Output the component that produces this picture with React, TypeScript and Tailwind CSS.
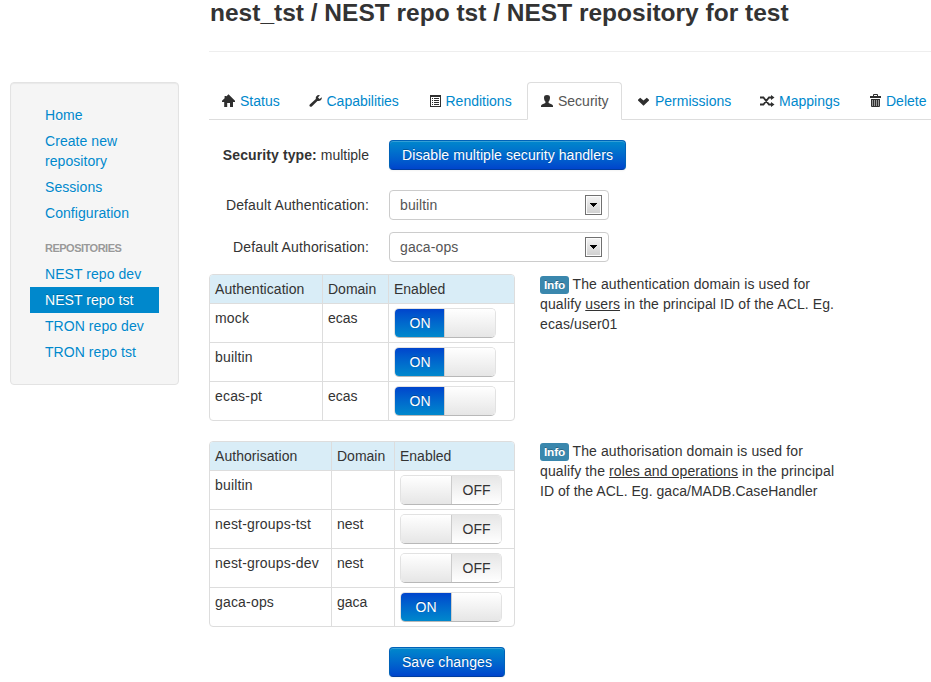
import React from "react";

function Icon({ name }: { name: string }) {
  return (
    <svg width="14" height="14" viewBox="0 0 14 14" fill="#2f2f2f" className="mt-[3px] mr-1 shrink-0 overflow-visible">
      {name === "home" && <path d="M6.5 0.3 L13 6.8 V8 H11 V13 H8 V9 H5.2 V13 H2.2 V8 H0 V6.8 L2.6 4.2 V2 H4.3 V2.5Z" />}
      {name === "wrench" && (
        <path d="M12.8 3.2 L10.6 5 L9 3.4 L10.8 1.2 C8.4 .6 6.2 2.6 6.8 5 L.8 10.6 C-.4 12 1.4 13.6 2.8 12.4 L8.4 7 C11 7.6 13.2 5.6 12.8 3.2Z" />
      )}
      {name === "list" && (
        <g transform="translate(1 0)">
          <path fillRule="evenodd" d="M1 1 H12 V13 H1Z M2 3 V12 H11 V3Z" />
          <path d="M3 4h1v1H3z M5 4h5v1H5z M3 6h1v1H3z M5 6h5v1H5z M3 8h1v1H3z M5 8h5v1H5z M3 10h1v1H3z M5 10h5v1H5z" />
        </g>
      )}
      {name === "user" && (
        <path d="M4 3.5 C4 1.8 5 1 7 1 S10 1.8 10 3.5 C10 5.5 9.4 6.8 8.6 7.6 V9 L12 10.5 Q13 11 13 12 V13 H1 V12 Q1 11 2 10.5 L5.4 9 V7.6 C4.6 6.8 4 5.5 4 3.5Z" />
      )}
      {name === "down" && <path d="M1 5.8 L3.2 3.8 L6.5 6.6 L9.8 3.8 L12 5.8 V6.6 L6.5 11.8 L1 6.6Z" />}
      {name === "random" && (
        <g transform="translate(-1 0)">
          <path d="M0 3.5H3.4L9 10.5H12 M0 10.5H3.4L9 3.5H12" fill="none" stroke="#2f2f2f" strokeWidth="1.8" />
          <path d="M11 1 L14.5 3.5 L11 6Z M11 8 L14.5 10.5 L11 13Z" />
        </g>
      )}
      {name === "trash" && (
        <>
          <path fill="#999" d="M3 5H12V12H3Z" />
          <path
            fillRule="evenodd"
            d="M2 2H5V1Q5 0 6 0H9Q10 0 10 1V2H13V4H2Z M6 1V2H9V1Z M3 5H12V12Q12 13 11 13H4Q3 13 3 12Z M4 6V12H5V6Z M6 6V12H7V6Z M8 6V12H9V6Z M10 6V12H11V6Z"
          />
        </>
      )}
    </svg>
  );
}

function Tab({ icon, children, width, active = false }: { icon: string; children: React.ReactNode; width: string; active?: boolean }) {
  return (
    <a
      className={
        "mr-[2px] flex h-[38px] shrink-0 rounded-t-[4px] border pt-2 pl-3 text-[14px] leading-[20px] whitespace-nowrap " +
        width +
        (active ? " border-[#ddd] border-b-white bg-white text-[#555]" : " border-transparent text-[#08c]")
      }
    >
      <Icon name={icon} />
      {children}
    </a>
  );
}

function SideLink({ children, active = false }: { children: React.ReactNode; active?: boolean }) {
  return (
    <a
      className={
        "block px-[15px] py-[3px] text-[14px] leading-[20px] tracking-[0.06px] " +
        (active ? "bg-[#08c] text-white [text-shadow:0_-1px_0_rgba(0,0,0,0.2)]" : "text-[#08c] [text-shadow:0_1px_0_rgba(255,255,255,0.5)]")
      }
    >
      {children}
    </a>
  );
}

function Button({ children, className }: { children: React.ReactNode; className: string }) {
  return (
    <button
      className={
        "flex h-[30px] items-center justify-center rounded-[4px] border border-[#0062b8] border-b-[#003c9e] bg-linear-to-b from-[#08c] to-[#04c] text-[14px] leading-[20px] whitespace-nowrap text-white shadow-[inset_0_1px_0_rgba(255,255,255,0.2),0_1px_2px_rgba(0,0,0,0.05)] [text-shadow:0_-1px_0_rgba(0,0,0,0.25)] " +
        className
      }
    >
      {children}
    </button>
  );
}

function SelectRow({ title, value, className }: { title: string; value: string; className: string }) {
  return (
    <div className={"flex h-[30px] items-center " + className}>
      <span className="w-[160px] text-right tracking-[0.13px]">{title}</span>
      <div className="ml-5 flex h-[30px] w-[220px] items-center justify-between rounded-[4px] border border-[#ccc] bg-white pr-[6px] pl-[10px] tracking-[0.1px] text-[#555]">
        {value}
        <span className="flex h-5 w-[17px] items-center justify-center border border-[#707070] bg-linear-to-b from-[#f4f4f4] to-[#cfcfcf] shadow-[inset_0_0_0_1px_#fcfcfc]">
          <svg width="7" height="4" viewBox="0 0 7 4" shapeRendering="crispEdges">
            <path d="M0 0H7L3.5 4Z" fill="#000" />
          </svg>
        </span>
      </div>
    </div>
  );
}

function Switch({ on, wide }: { on: boolean; wide: boolean }) {
  const half = wide ? "w-[50px]" : "w-[49px] pl-px";
  return (
    <div className="flex h-[30px] w-[102px] overflow-hidden rounded-[5px] border border-[#e2e2e2] border-b-[#b8b8b8] leading-[28px]">
      {on ? (
        <>
          <span className={"bg-linear-to-b from-[#04c] to-[#08c] text-center text-white [text-shadow:0_-1px_0_rgba(0,0,0,0.25)] " + half}>ON</span>
          <span className="flex-1 border-l border-[#ccc] bg-linear-to-b from-white to-[#e6e6e6]" />
        </>
      ) : (
        <>
          <span className="w-[51px] border-r border-[#ccc] bg-linear-to-b from-white to-[#e6e6e6]" />
          <span className="flex-1 bg-linear-to-b from-[#e6e6e6] to-white text-center text-[#333]">OFF</span>
        </>
      )}
    </div>
  );
}

type Row = [string, string, boolean];

function Table({ title, rows, wide = false }: { title: string; rows: Row[]; wide?: boolean }) {
  const cols = wide ? "grid-cols-[121px_63px_120px]" : "grid-cols-[112px_66px_126px]";
  return (
    <div className="w-[306px] shrink-0 overflow-hidden rounded-[4px] border border-[#ddd]">
      <div className={"grid h-7 bg-[#d9edf7] " + cols}>
        <span className="px-[5px] pt-1 tracking-[0.05px]">{title}</span>
        <span className="border-l border-[#ddd] px-[5px] pt-1">Domain</span>
        <span className="border-l border-[#ddd] px-[5px] pt-1">Enabled</span>
      </div>
      {rows.map(([name, domain, on]) => (
        <div key={name} className={"grid h-[39px] border-t border-[#ddd] " + cols}>
          <span className="pt-1 pl-[5px] tracking-[0.18px] whitespace-nowrap">{name}</span>
          <span className="border-l border-[#ddd] px-[5px] pt-1">{domain}</span>
          <span className="border-l border-[#ddd] pt-1 pl-[5px]">
            <Switch on={on} wide={wide} />
          </span>
        </div>
      ))}
    </div>
  );
}

function Info({ children }: { children: React.ReactNode }) {
  return (
    <p className="ml-[25px] w-[302px] tracking-[0.11px]">
      <span className="mr-[3.5px] inline-block w-[29px] rounded-[3px] bg-[#3a87ad] py-[2px] text-center align-baseline text-[11.84px] leading-[14px] font-bold tracking-[-0.15px] text-white [text-shadow:0_-1px_0_rgba(0,0,0,0.25)]">
        Info
      </span>
      {children}
    </p>
  );
}

export default function App() {
  return (
    <div className="flex h-[682px] w-[931px] overflow-hidden bg-white font-['Liberation_Sans',Arial,sans-serif] text-[14px] leading-[20px] text-[#333]">
      <nav className="mt-[82px] ml-[10px] h-[303px] w-[169px] shrink-0 rounded-[4px] border border-[#e3e3e3] bg-[#f5f5f5] px-[19px] pt-[19px] shadow-[inset_0_1px_1px_rgba(0,0,0,0.05)]">
        <SideLink>Home</SideLink>
        <SideLink>Create new repository</SideLink>
        <SideLink>Sessions</SideLink>
        <SideLink>Configuration</SideLink>
        <div className="mt-[9px] px-[15px] py-[3px] text-[11px] leading-[20px] font-bold tracking-[-0.5px] text-[#999] uppercase [text-shadow:0_1px_0_rgba(255,255,255,0.5)]">
          Repositories
        </div>
        <SideLink>NEST repo dev</SideLink>
        <SideLink active>NEST repo tst</SideLink>
        <SideLink>TRON repo dev</SideLink>
        <SideLink>TRON repo tst</SideLink>
      </nav>

      <main className="ml-[30px] flex w-[722px] shrink-0 flex-col">
        <h1 className="h-[52px] shrink-0 border-b border-[#eee] pl-px text-[24.5px] leading-[26px] font-bold whitespace-nowrap">
          nest_tst / NEST repo tst / NEST repository for test
        </h1>

        <div className="mt-[30px] flex h-[38px] shrink-0 border-b border-[#ddd]">
          <Tab icon="home" width="w-[84.5px]">Status</Tab>
          <Tab icon="wrench" width="w-[117px]">Capabilities</Tab>
          <Tab icon="list" width="w-[110.5px]">Renditions</Tab>
          <Tab icon="user" width="w-[95px]" active>Security</Tab>
          <Tab icon="down" width="w-[122px]">Permissions</Tab>
          <Tab icon="random" width="w-[105px]">Mappings</Tab>
          <Tab icon="trash" width="w-[85px]">Delete</Tab>
        </div>

        <div className="mt-5 flex h-[30px] items-center">
          <span className="w-[160px] text-right">
            <b className="tracking-[0.1px]">Security type:</b> multiple
          </span>
          <Button className="ml-5 w-[237px] tracking-[0.07px]">Disable multiple security handlers</Button>
        </div>
        <SelectRow className="mt-5" title="Default Authentication:" value="builtin" />
        <SelectRow className="mt-3" title="Default Authorisation:" value="gaca-ops" />

        <section className="mt-3 flex">
          <Table title="Authentication" rows={[["mock", "ecas", true], ["builtin", "", true], ["ecas-pt", "ecas", true]]} />
          <Info>
            The authentication domain is used for qualify <u>users</u> in the principal ID of the ACL. Eg. ecas/user01
          </Info>
        </section>
        <section className="mt-5 flex">
          <Table
            wide
            title="Authorisation"
            rows={[["builtin", "", false], ["nest-groups-tst", "nest", false], ["nest-groups-dev", "nest", false], ["gaca-ops", "gaca", true]]}
          />
          <Info>
            The authorisation domain is used for qualify the <u>roles and operations</u> in the principal{" "}
            <span className="tracking-[0.03px]">ID of the ACL. Eg. gaca/MADB.CaseHandler</span>
          </Info>
        </section>

        <Button className="mt-5 ml-[180px] w-[116px] shrink-0 tracking-[0.12px]">Save changes</Button>
      </main>
    </div>
  );
}
